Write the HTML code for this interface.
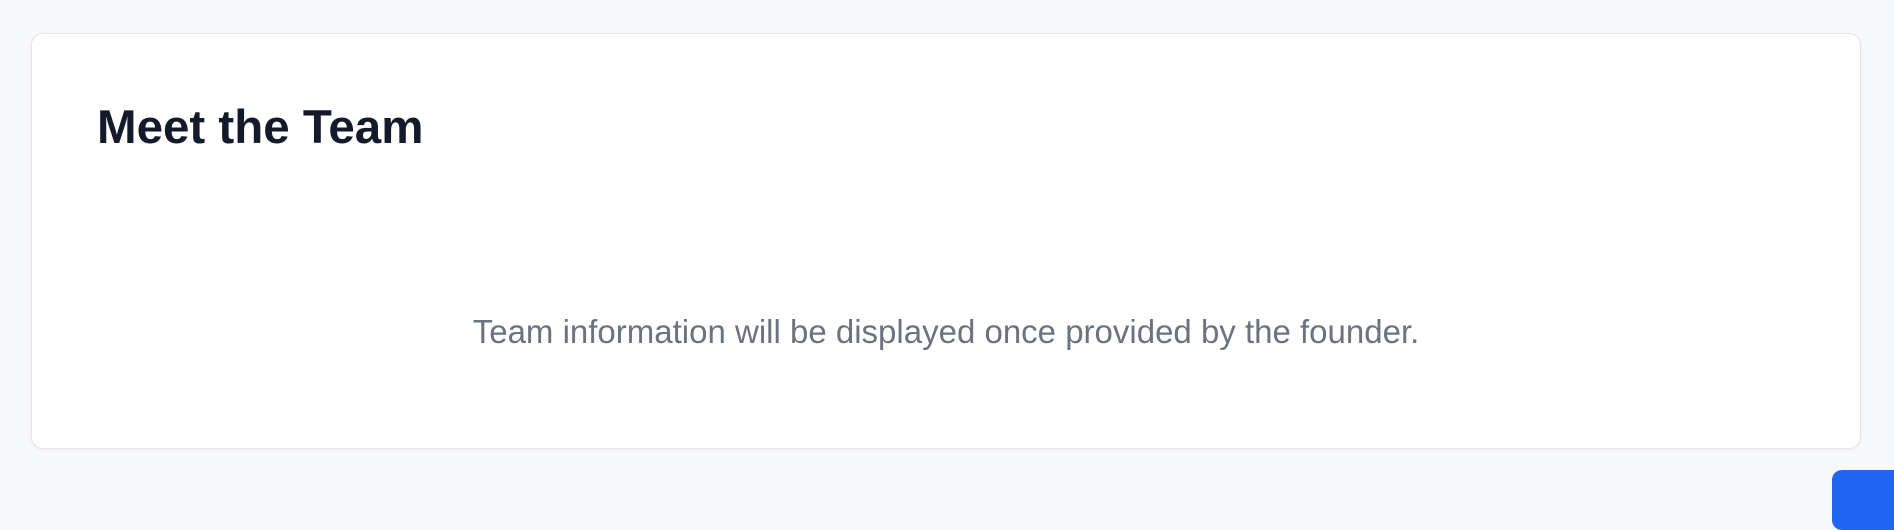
<!DOCTYPE html>
<html><head><style>
html,body{margin:0;padding:0;}
body{width:1894px;height:500px;background:#f8f9fb;position:relative;overflow:hidden;font-family:"Liberation Sans",Arial,sans-serif;}
.card{position:absolute;left:31px;top:33px;width:1830px;height:416px;background:#fff;border:1.5px solid #e5e5e5;border-radius:12px;box-sizing:border-box;box-shadow:0 1px 3px rgba(0,0,0,0.05);}
h2{position:absolute;left:65px;top:70px;margin:0;font-size:47.5px;font-weight:bold;color:#131a2a;line-height:1;}
p{position:absolute;left:0;right:0;top:278px;margin:0;text-align:center;font-size:33px;color:#6b7280;line-height:1.2;}
.btn{position:absolute;left:1832px;top:470px;width:120px;height:60px;background:#1f66f5;border-radius:10px;}
</style></head><body>
<div class="card"><h2>Meet the Team</h2><p>Team information will be displayed once provided by the founder.</p></div>
<div class="btn"></div>
</body></html>
